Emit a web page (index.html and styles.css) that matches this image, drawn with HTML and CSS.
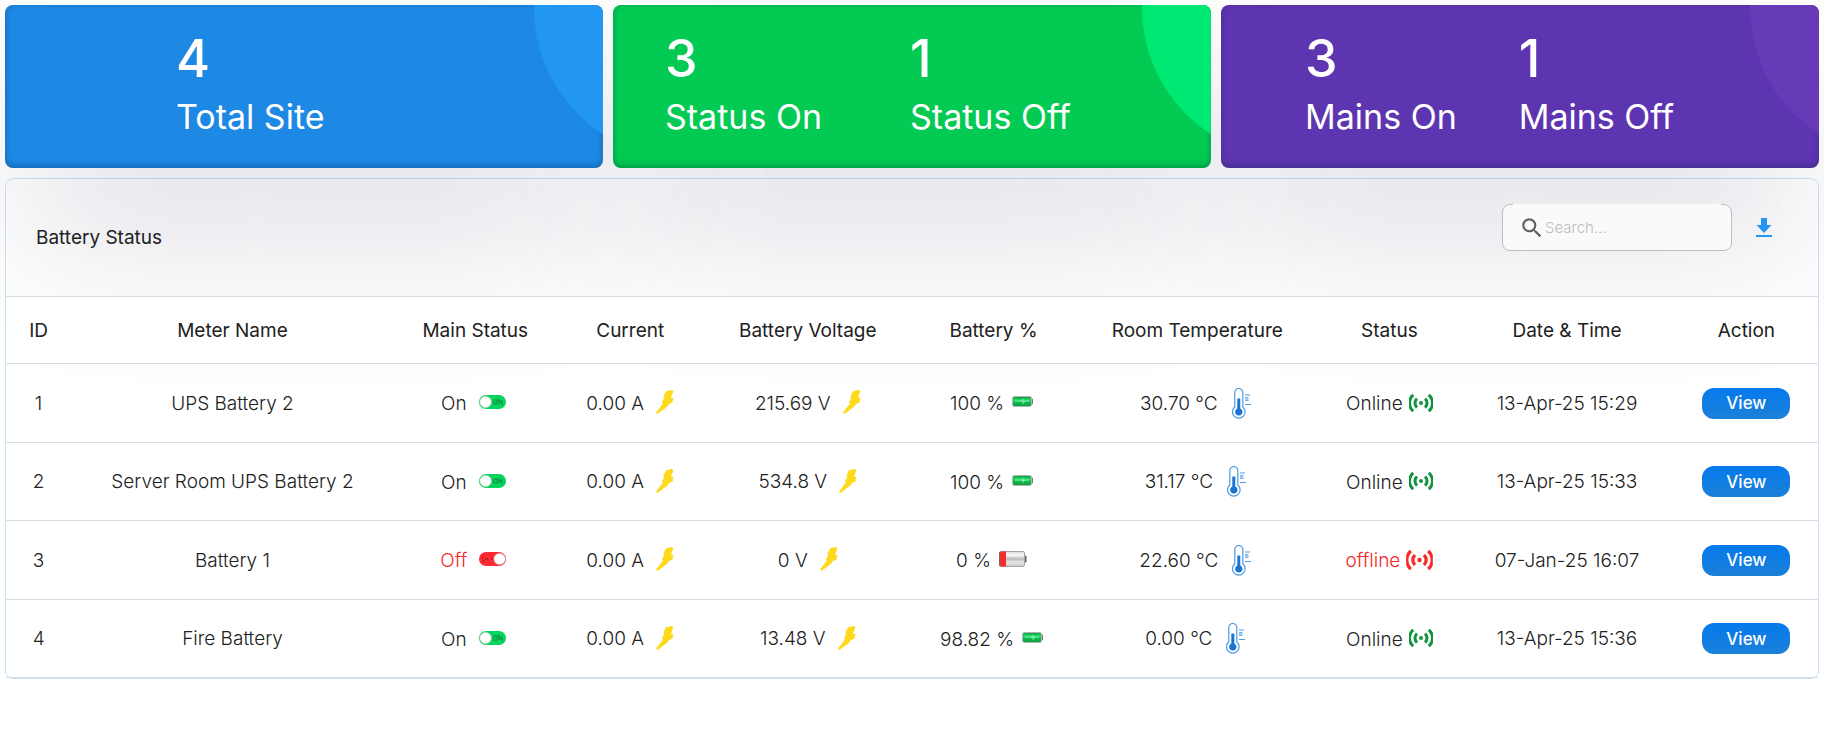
FILE: index.html
```html
<!DOCTYPE html>
<html lang="en">
<head>
<meta charset="utf-8">
<meta name="viewport" content="width=device-width, initial-scale=1">
<title>Battery Status</title>
<link rel="stylesheet" href="styles.css">
</head>
<body>
<svg class="sprite" aria-hidden="true">
  <defs>
    <linearGradient id="cell-green" x1="0" y1="0" x2="0" y2="1">
      <stop offset="0" stop-color="#0c8f3c"/><stop offset=".35" stop-color="#1fe069"/><stop offset=".6" stop-color="#0fb94b"/><stop offset="1" stop-color="#0a9a3e"/>
    </linearGradient>
    <linearGradient id="cell-grey" x1="0" y1="0" x2="0" y2="1">
      <stop offset="0" stop-color="#d9d9d9"/><stop offset=".25" stop-color="#fafafa"/><stop offset=".5" stop-color="#b9b9b9"/><stop offset=".7" stop-color="#e6e6e6"/><stop offset="1" stop-color="#c9c9c9"/>
    </linearGradient>
  </defs>
  <symbol id="toggle-on" viewBox="0 0 27 14">
    <rect width="27" height="14" rx="7" fill="#06d45c"/>
    <path d="M15 5h3v4h-3zM20 9V5l3 4V5" fill="none" stroke="#0b9f4a" stroke-width="1.3"/>
    <circle cx="6.6" cy="7" r="5.8" fill="#fff" stroke="#a9c9b4" stroke-width=".6"/>
  </symbol>
  <symbol id="toggle-off" viewBox="0 0 27 14">
    <rect width="27" height="14" rx="7" fill="#fb2a33"/>
    <path d="M3 6h1M4 9h1M6 7h1M8 7h1M12 7h1" stroke="#5c0a10" stroke-width="1.2"/>
    <circle cx="20.6" cy="7" r="5.8" fill="#fff" stroke="#d79a9c" stroke-width=".6"/>
  </symbol>
  <symbol id="bolt" viewBox="0 0 18 24">
    <path d="M10 1.2 15.5 0 17.5 1 15 7.5 18 8.5 16.5 10 17 12 12.5 14.5 11.5 16.5 1.5 24 0 22.5 7 13.5 5.8 12.5 8 8.5 7.5 6.5z" fill="#ffd91c"/>
  </symbol>
  <symbol id="battery-full" viewBox="0 0 21 11">
    <rect x="19" y="2.5" width="2" height="6" rx="1" fill="#777"/>
    <rect x=".5" y=".5" width="19" height="10" rx="2" fill="url(#cell-green)" stroke="#b3b3b3"/>
    <path d="M3 5h14M11.500 3l-2 2.500h3l-2 2.500" fill="none" stroke="#8ff5b4" stroke-width=".9"/>
  </symbol>
  <symbol id="battery-empty" viewBox="0 0 28 16">
    <rect x="25" y="4.5" width="2.5" height="7" rx="1" fill="#666"/>
    <rect x=".5" y=".5" width="25" height="15" rx="1.5" fill="url(#cell-grey)" stroke="#a5a5a5"/>
    <rect x="0" y="1" width="2" height="14" rx="1" fill="#8f5a5a"/>
    <rect x="1.5" y=".5" width="5.5" height="15" fill="#fb2a2a"/>
  </symbol>
  <symbol id="thermometer" viewBox="0 0 19 31">
    <path d="M2.8 19V4.500a4 4 0 0 1 8 0V19a6.300 6.300 0 1 1-8 0z" fill="#fff" stroke="#4a9be0" stroke-width="1.200"/>
    <path d="M5.300 10.500h3V20.500a3.700 3.700 0 1 1-3 0z" fill="#1b75d0"/>
    <path d="M13 7h5M13 9.800h3.500M13 12.200h3.500M13 16.500h6" stroke="#4a9be0" stroke-width="1.200"/>
  </symbol>
  <symbol id="signal" viewBox="0 0 24 18">
    <circle cx="12" cy="9" r="2" fill="currentColor"/>
    <path d="M8 4.500a6 6 0 0 0 0 9M16 4.500a6 6 0 0 1 0 9M4.200 .8a11 11 0 0 0 0 16.400M19.800 .8a11 11 0 0 1 0 16.400" fill="none" stroke="currentColor" stroke-width="3"/>
  </symbol>
</svg>

<main class="page">
  <section class="cards">
    <div class="slot">
      <article class="card card-total">
        <div class="stat"><strong>4</strong><span>Total Site</span></div>
      </article>
    </div>
    <div class="slot">
      <article class="card card-status">
        <div class="stat"><strong>3</strong><span>Status On</span></div>
        <div class="stat"><strong>1</strong><span>Status Off</span></div>
      </article>
    </div>
    <div class="slot">
      <article class="card card-mains">
        <div class="stat"><strong>3</strong><span>Mains On</span></div>
        <div class="stat"><strong>1</strong><span>Mains Off</span></div>
      </article>
    </div>
  </section>

  <section class="panel">
    <header class="panel-head">
      <h1>Battery Status</h1>
      <div class="tools">
        <label class="search">
          <svg viewBox="0 0 24 24" aria-hidden="true"><path d="M15.500 14h-.79l-.28-.27A6.471 6.471 0 0 0 16 9.500 6.500 6.500 0 1 0 9.500 16c1.610 0 3.090-.59 4.230-1.570l.27.28v.79l5 4.990L20.490 19zm-6 0C7.010 14 5 11.990 5 9.500S7.010 5 9.500 5 14 7.010 14 9.500 11.990 14 9.500 14"/></svg>
          <input type="search" placeholder="Search..." aria-label="Search">
        </label>
        <button class="download" type="button" aria-label="Download">
          <svg viewBox="0 0 16 20"><path d="M5 0h6v7h4.500L8 15 .5 7H5zM0 17h16v2H0z"/></svg>
        </button>
      </div>
    </header>
    <table>
      <colgroup>
        <col class="c-id"><col class="c-name"><col class="c-main"><col class="c-current"><col class="c-volt"><col class="c-batt"><col class="c-temp"><col class="c-status"><col class="c-date"><col class="c-action">
      </colgroup>
      <thead>
        <tr><th>ID</th><th>Meter Name</th><th>Main Status</th><th>Current</th><th>Battery Voltage</th><th>Battery %</th><th>Room Temperature</th><th>Status</th><th>Date &amp; Time</th><th>Action</th></tr>
      </thead>
      <tbody>
        <tr>
          <td>1</td><td>UPS Battery 2</td>
          <td><span class="reading main">On<svg class="toggle"><use href="#toggle-on"/></svg></span></td>
          <td><span class="reading">0.00 A<svg class="bolt"><use href="#bolt"/></svg></span></td>
          <td><span class="reading">215.69 V<svg class="bolt"><use href="#bolt"/></svg></span></td>
          <td><span class="reading charge">100 %<svg class="full"><use href="#battery-full"/></svg></span></td>
          <td><span class="reading temp">30.70 °C<svg class="thermo"><use href="#thermometer"/></svg></span></td>
          <td><span class="reading link">Online<svg class="signal"><use href="#signal"/></svg></span></td>
          <td>13-Apr-25 15:29</td><td><button class="view" type="button">View</button></td>
        </tr>
        <tr>
          <td>2</td><td>Server Room UPS Battery 2</td>
          <td><span class="reading main">On<svg class="toggle"><use href="#toggle-on"/></svg></span></td>
          <td><span class="reading">0.00 A<svg class="bolt"><use href="#bolt"/></svg></span></td>
          <td><span class="reading">534.8 V<svg class="bolt"><use href="#bolt"/></svg></span></td>
          <td><span class="reading charge">100 %<svg class="full"><use href="#battery-full"/></svg></span></td>
          <td><span class="reading temp">31.17 °C<svg class="thermo"><use href="#thermometer"/></svg></span></td>
          <td><span class="reading link">Online<svg class="signal"><use href="#signal"/></svg></span></td>
          <td>13-Apr-25 15:33</td><td><button class="view" type="button">View</button></td>
        </tr>
        <tr>
          <td>3</td><td>Battery 1</td>
          <td><span class="reading main alert">Off<svg class="toggle"><use href="#toggle-off"/></svg></span></td>
          <td><span class="reading">0.00 A<svg class="bolt"><use href="#bolt"/></svg></span></td>
          <td><span class="reading">0 V<svg class="bolt"><use href="#bolt"/></svg></span></td>
          <td><span class="reading charge">0 %<svg class="empty"><use href="#battery-empty"/></svg></span></td>
          <td><span class="reading temp">22.60 °C<svg class="thermo"><use href="#thermometer"/></svg></span></td>
          <td><span class="reading link alert">offline<svg class="signal" viewBox="0 0 24 18"><use href="#signal"/></svg></span></td>
          <td>07-Jan-25 16:07</td><td><button class="view" type="button">View</button></td>
        </tr>
        <tr>
          <td>4</td><td>Fire Battery</td>
          <td><span class="reading main">On<svg class="toggle"><use href="#toggle-on"/></svg></span></td>
          <td><span class="reading">0.00 A<svg class="bolt"><use href="#bolt"/></svg></span></td>
          <td><span class="reading">13.48 V<svg class="bolt"><use href="#bolt"/></svg></span></td>
          <td><span class="reading charge">98.82 %<svg class="full"><use href="#battery-full"/></svg></span></td>
          <td><span class="reading temp">0.00 °C<svg class="thermo"><use href="#thermometer"/></svg></span></td>
          <td><span class="reading link">Online<svg class="signal"><use href="#signal"/></svg></span></td>
          <td>13-Apr-25 15:36</td><td><button class="view" type="button">View</button></td>
        </tr>
      </tbody>
    </table>
  </section>
</main>
</body>
</html>
```
FILE: styles.css
```css
* { box-sizing: border-box; }

body {
  margin: 0;
  background: #fff;
  color: #212121;
  font-family: Inter, Roboto, sans-serif;
}

.sprite { position: absolute; width: 0; height: 0; }

.page { padding: 5px; }

.cards {
  display: grid;
  grid-template-columns: repeat(3, 1fr);
  gap: 10px;
}

/* the slot carries the wide shadow, so neighbouring cards stay above it */
.slot {
  border-radius: 8px;
  box-shadow: 0 80px 160px -20px rgba(50, 50, 93, .19);
}

.card {
  position: relative;
  display: flex;
  overflow: hidden;
  padding: 29px 0;
  border-radius: 8px;
  box-shadow: inset 0 -2px 6px 0 rgba(10, 37, 64, .35);
  color: #fff;
}

.card::after {
  content: "";
  position: absolute;
  top: -147px;
  right: -231px;
  width: 300px;
  height: 300px;
  border-radius: 50%;
}

.card-total { background: #1e88e5; padding-left: 171px; }
.card-total::after { background: #2196f3; }
.card-status { background: #02ca52; padding-left: 52px; gap: 88px; }
.card-status::after { background: #00e874; }
.card-mains { background: #5e35b1; padding-left: 84px; gap: 62px; }
.card-mains::after { background: #673ab7; }

.stat { display: flex; flex-direction: column; }
.stat strong { font-size: 52px; line-height: 50px; font-weight: 500; }
.stat span { margin-top: 11px; font-size: 34px; line-height: 44px; }

.panel {
  margin-top: 10px;
  border: 1px solid rgba(33, 150, 243, .25);
  border-radius: 8px;
}

.panel-head {
  display: flex;
  justify-content: space-between;
  align-items: center;
  min-height: 118px;
  padding: 0 38px 0 30px;
  border-bottom: 1px solid #e0e0e0;
}

h1 { margin: 0; font-size: 19px; font-weight: 400; }

.tools {
  display: flex;
  align-items: center;
  gap: 16px;
  padding-bottom: 20px;
}

.search {
  position: relative;
  display: flex;
  align-items: center;
  width: 230px;
  height: 47px;
  padding: 0 16px;
  border: 1px solid #bdbdbd;
  border-radius: 8px;
  background: #fafafa;
}

/* gap in the top outline */
.search::before {
  content: "";
  position: absolute;
  top: -1px;
  left: 10px;
  right: 10px;
  height: 1px;
  background: #fafafa;
}

.search svg { flex: none; width: 26px; height: 26px; fill: #616161; }

.search input {
  flex: 1;
  min-width: 0;
  padding: 0;
  border: 0;
  outline: 0;
  background: transparent;
  font: 300 15px Inter, Roboto, sans-serif;
  color: #212121;
}

.search input::placeholder { color: #bdbdbd; opacity: 1; }

.download {
  display: flex;
  padding: 8px;
  border: 0;
  background: transparent;
}

.download svg { width: 16px; height: 20px; fill: #2196f3; }

table {
  width: 100%;
  table-layout: fixed;
  border-collapse: separate;
  border-spacing: 0;
  font-size: 19px;
}

.c-id { width: 3.6%; }
.c-name { width: 17.8%; }
.c-main { width: 9%; }
.c-current { width: 8.1%; }
.c-volt { width: 11.5%; }
.c-batt { width: 9%; }
.c-temp { width: 13.5%; }
.c-status { width: 7.7%; }
.c-date { width: 11.9%; }
.c-action { width: 7.9%; }

th, td {
  padding: 0;
  border-bottom: 1px solid #dcdcde;
  text-align: center;
  white-space: nowrap;
}

/* stacked above the card shadows so the heading row stays white */
th { position: relative; height: 67px; background: #fff; font-weight: 400; }
td { height: 79px; font-weight: 300; }
tr:nth-child(even) td { height: 78px; }

.reading { display: inline-flex; align-items: center; gap: 12px; vertical-align: middle; }
.reading svg { flex: none; }
.main { padding-right: 4px; }
.charge { gap: 8px; padding-right: 4px; }
.temp { gap: 14px; padding-right: 4px; }
.link { gap: 6px; }
.alert { color: #f52525; }

.toggle { width: 27px; height: 14px; margin-bottom: 3px; }
.bolt { width: 18px; height: 24px; margin-bottom: 2px; }
.full { width: 21px; height: 11px; margin-bottom: 4px; }
.empty { width: 28px; height: 16px; margin-bottom: 4px; }
.thermo { width: 19px; height: 31px; }
.signal { width: 24px; height: 18px; margin-bottom: 2px; color: #119440; }
.alert .signal { width: 27px; height: 20px; color: #fb2a2a; }

.view {
  width: 88px;
  height: 31px;
  padding: 0;
  border: 0;
  border-radius: 12px;
  background: linear-gradient(#057aed, #1b80d8);
  color: #fff;
  font: 500 17px Inter, Roboto, sans-serif;
}
```
